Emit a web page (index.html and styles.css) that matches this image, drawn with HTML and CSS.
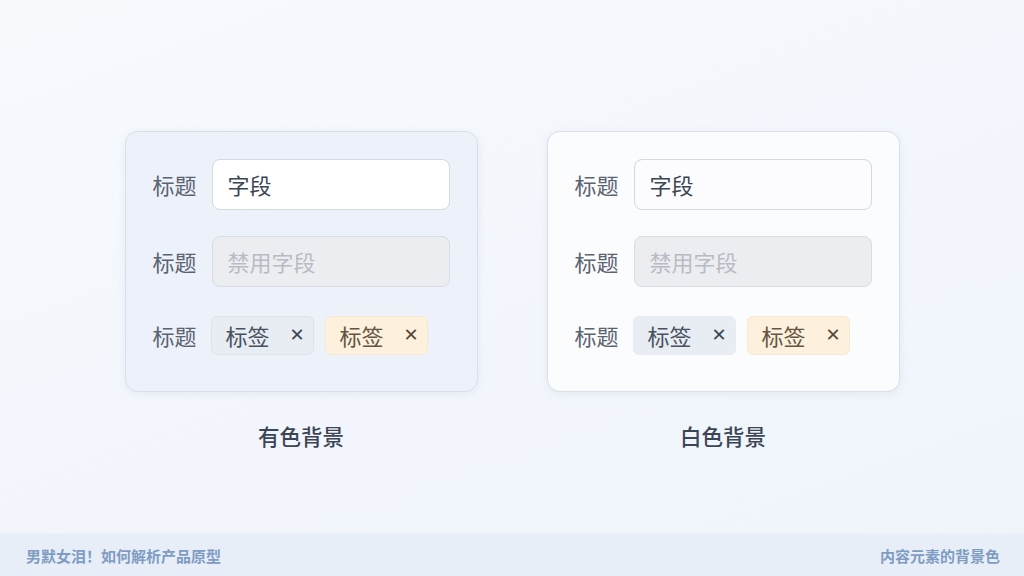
FILE: index.html
```html
<!DOCTYPE html>
<html lang="zh-CN">
<head>
<meta charset="utf-8">
<title>内容元素的背景色</title>
<link rel="stylesheet" href="styles.css">
</head>
<body>
<main class="stage">
  <section class="demo">
    <div class="card card-tinted">
      <div class="row row-input">
        <span class="label">标题</span>
        <div class="field">字段</div>
      </div>
      <div class="row row-input row-gap">
        <span class="label">标题</span>
        <div class="field field-disabled">禁用字段</div>
      </div>
      <div class="row row-tags">
        <span class="label">标题</span>
        <div class="tags">
          <span class="tag tag-gray">标签<span class="x">✕</span></span>
          <span class="tag tag-orange">标签<span class="x">✕</span></span>
        </div>
      </div>
    </div>
    <div class="caption">有色背景</div>
  </section>
  <section class="demo">
    <div class="card card-white">
      <div class="row row-input">
        <span class="label">标题</span>
        <div class="field">字段</div>
      </div>
      <div class="row row-input row-gap">
        <span class="label">标题</span>
        <div class="field field-disabled">禁用字段</div>
      </div>
      <div class="row row-tags">
        <span class="label">标题</span>
        <div class="tags">
          <span class="tag tag-gray">标签<span class="x">✕</span></span>
          <span class="tag tag-orange">标签<span class="x">✕</span></span>
        </div>
      </div>
    </div>
    <div class="caption">白色背景</div>
  </section>
</main>
<footer class="footer">
  <span>男默女泪！如何解析产品原型</span>
  <span>内容元素的背景色</span>
</footer>
</body>
</html>
```
FILE: styles.css
```css
* { box-sizing: border-box; }
html, body { margin: 0; padding: 0; }
body {
  width: 1024px;
  height: 576px;
  overflow: hidden;
  font-family: "Noto Sans CJK SC", "Noto Sans", sans-serif;
  background: linear-gradient(160deg, #f7f9fd 0%, #f2f6fc 60%, #eff4fb 100%);
  display: flex;
  flex-direction: column;
}
.stage {
  height: 533px;
  display: flex;
  justify-content: center;
  gap: 69px;
  padding-top: 131px;
}
.demo {
  width: 353px;
  display: flex;
  flex-direction: column;
}
.card {
  width: 353px;
  height: 261px;
  border-radius: 13px;
  border: 1px solid #d9dee7;
  padding: 27px 27px 0 27px;
  box-shadow: 0 2px 8px rgba(160, 175, 200, 0.18);
}
.card-tinted { background: #edf2fa; }
.card-white { background: #fbfcfe; }
.row {
  display: flex;
  align-items: center;
  gap: 15px;
}
.row-input { height: 51px; }
.row-gap { margin-top: 26px; }
.row-tags { height: 39px; margin-top: 29px; }
.label {
  width: 44px;
  font-size: 22px;
  line-height: 30px;
  margin-top: -2px;
  color: #5b6471;
  white-space: nowrap;
}
.field {
  width: 238px;
  height: 51px;
  border-radius: 8px;
  border: 1px solid #d3d8e1;
  background: #ffffff;
  font-size: 22px;
  line-height: 30px;
  color: #3b4553;
  display: flex;
  align-items: center;
  padding-left: 15px;
  padding-bottom: 2px;
}
.card-white .field { background: #fcfcfe; }
.field.field-disabled {
  background: #ecedf0;
  border-color: #d8dce3;
  color: #b7bcc4;
}
.tags {
  display: flex;
  gap: 11px;
  margin-left: -1px;
}
.tag {
  width: 103px;
  height: 39px;
  border-radius: 6px;
  display: flex;
  align-items: center;
  padding-left: 14px;
  font-size: 22px;
  line-height: 30px;
  padding-bottom: 2px;
}
.tag-gray {
  background: #e8ecf3;
  border: 1px solid #dee3eb;
  color: #48525f;
}
.card-white .tag-gray { border-color: #e8ecf3; }
.tag-orange {
  background: #fdf0dc;
  border: 1px solid #f7e8d2;
  color: #655545;
}
.x {
  margin-left: 20px;
  font-size: 18px;
  font-family: "DejaVu Sans", sans-serif;
  font-weight: bold;
}
.tag-gray .x { color: #3e4856; }
.tag-orange .x { color: #5b4a3a; }
.caption {
  margin-top: 31px;
  text-align: center;
  font-size: 21.5px;
  line-height: 26px;
  font-weight: 500;
  color: #3b4556;
}
.footer {
  height: 43px;
  background: #e7eef8;
  border-top: 1px solid #edf2fa;
  display: flex;
  justify-content: space-between;
  align-items: center;
  padding: 0 24px 0 26px;
  font-size: 15px;
  font-weight: 700;
  color: #7f9cc2;
}
```
